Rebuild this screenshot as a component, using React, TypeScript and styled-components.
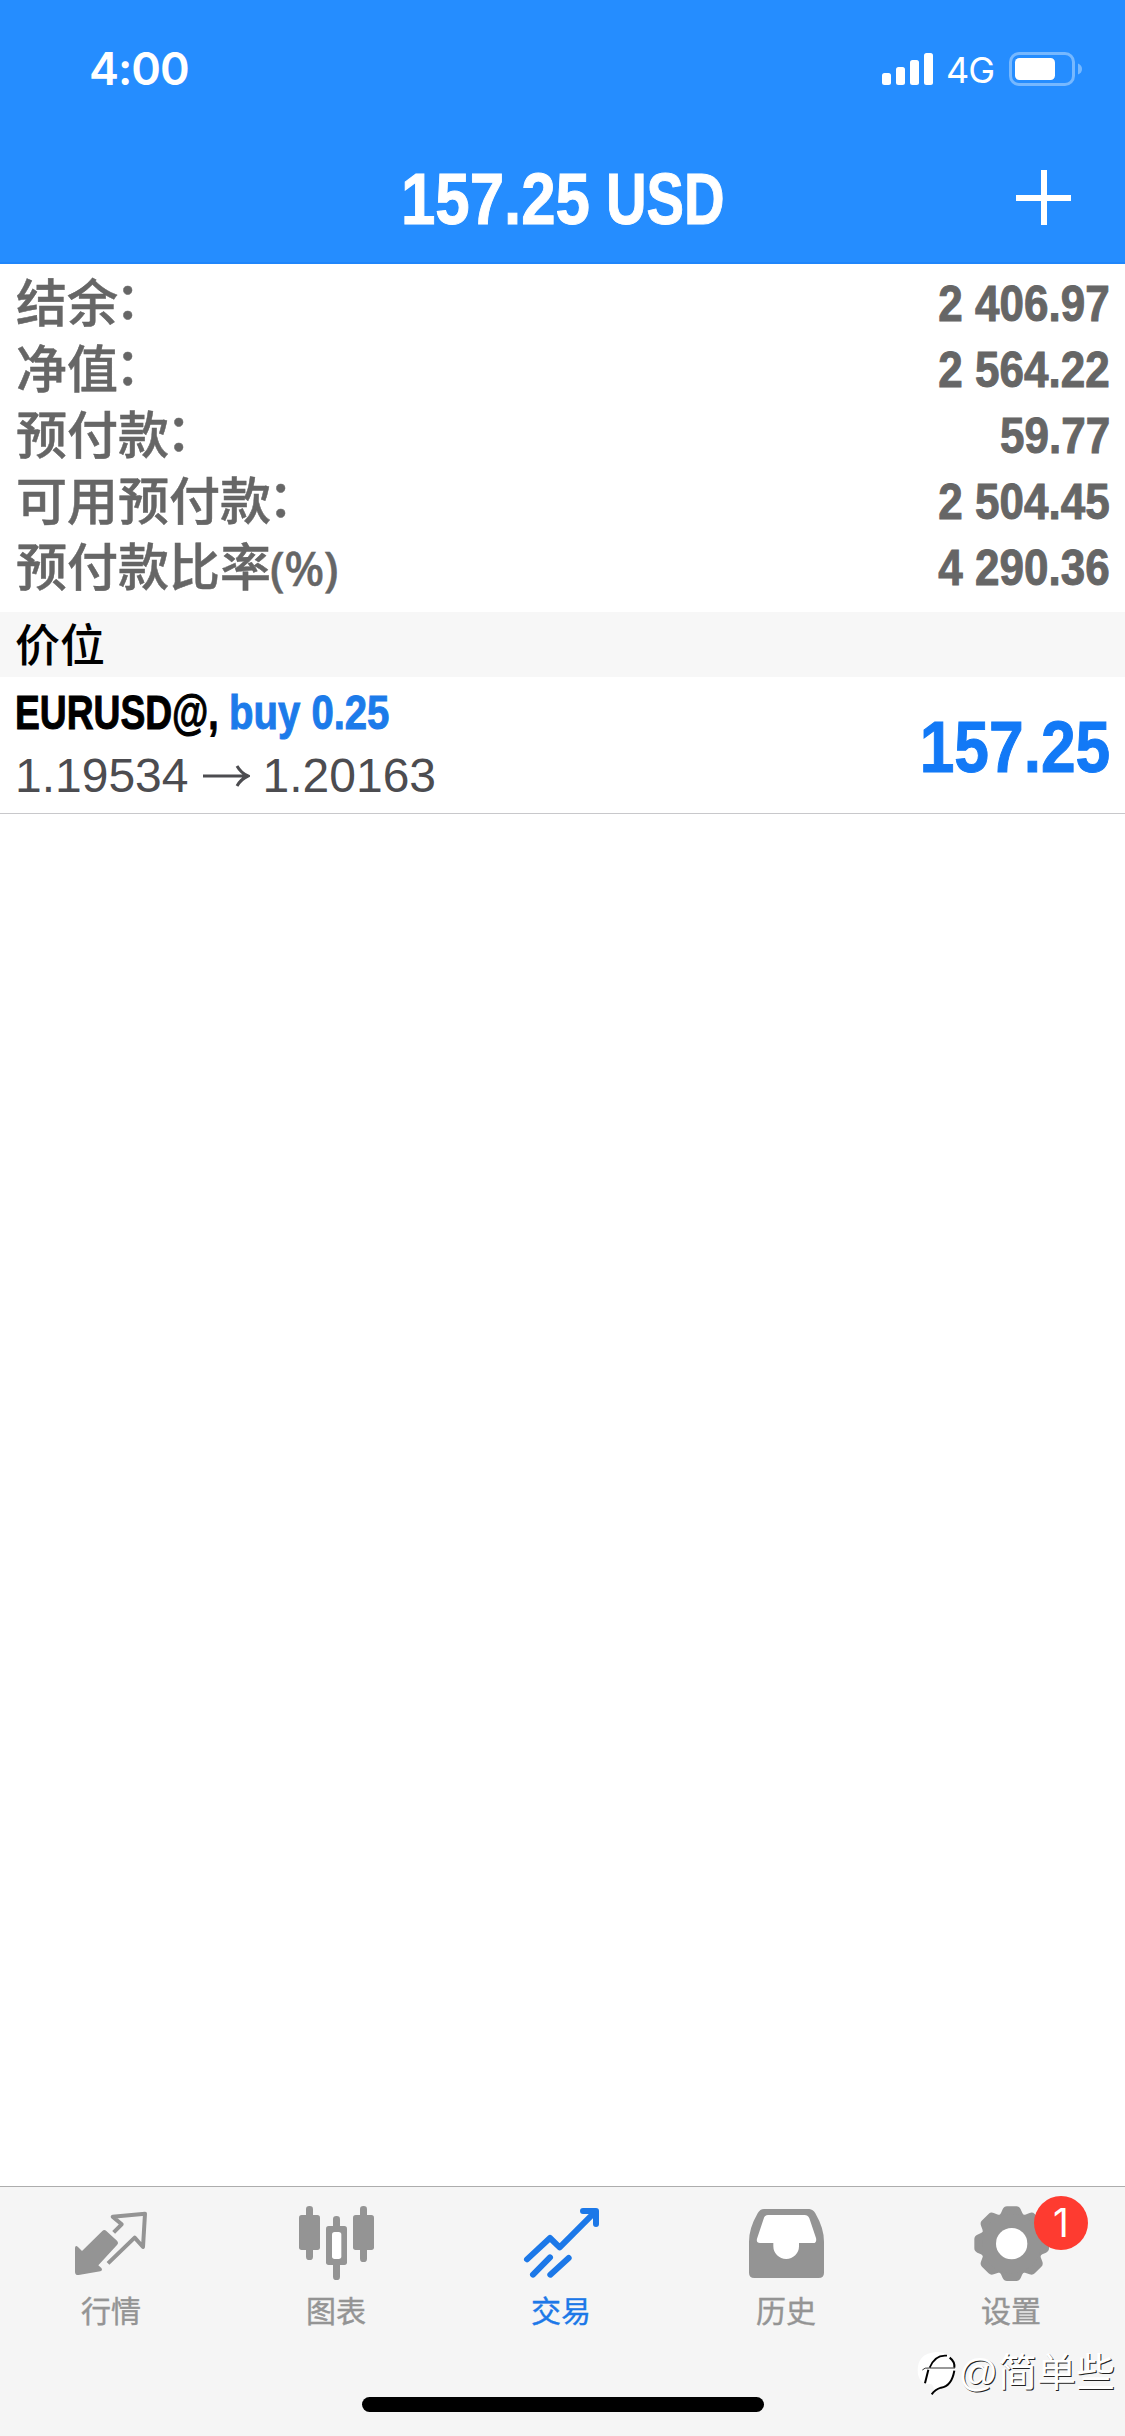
import React from 'react';
import styled, { createGlobalStyle } from 'styled-components';

const GlobalStyle = createGlobalStyle`
  * { box-sizing: border-box; }
  body { margin: 0; background: #fff; }
`;

const latin = '"Liberation Sans", "Noto Sans CJK SC", sans-serif';
const cjk = '"Noto Sans CJK SC", sans-serif';

const Screen = styled.div`
  display: flex;
  flex-direction: column;
  width: 1125px;
  height: 2436px;
  overflow: hidden;
  background: #fff;
  font-family: ${latin};
`;

const Header = styled.header`
  height: 264px;
  flex: none;
  background: #258dff;
  border-bottom: 2px solid #1f86fb;
  color: #fff;
`;

const StatusBar = styled.div`
  display: flex;
  align-items: center;
  justify-content: space-between;
  height: 138px;
  padding: 0 42px 0 89px;
`;

const Clock = styled.div`
  font: 600 45px/54px Inter, sans-serif;
  letter-spacing: -1px;
`;

const StatusIcons = styled.div`
  display: flex;
  align-items: center;
`;

const Network = styled.span`
  width: 75px;
  padding-left: 12px;
  padding-top: 2px;
  font: 400 36px/44px Inter, sans-serif;
  letter-spacing: -1px;
`;

const TitleBar = styled.div`
  display: grid;
  grid-template-columns: 1fr auto 1fr;
  align-items: center;
  height: 120px;
  padding: 0 53px;
`;

const Title = styled.h1`
  display: flex;
  grid-column: 2;
  margin: 0;
  padding-top: 2px;
  font-size: 72px;
  line-height: 118px;
`;

const AddButton = styled.button`
  justify-self: end;
  display: flex;
  padding: 0;
  border: 0;
  background: none;
  color: #fff;
`;

const Condensed = styled.span<{ $scale: number; $width?: number; $right?: boolean }>`
  display: block;
  flex: none;
  width: ${p => (p.$width ? `${p.$width}px` : 'auto')};
  font-weight: 700;
  white-space: nowrap;
  -webkit-text-stroke: 1px currentColor;
  transform: scaleX(${p => p.$scale});
  transform-origin: ${p => (p.$right ? 'right' : 'left')} center;
`;

const Summary = styled.section`
  flex: none;
  height: 348px;
  padding: 7px 15px 0 15px;
`;

const SummaryRow = styled.div`
  display: flex;
  justify-content: space-between;
  align-items: flex-start;
  height: 66px;
  color: #666;
`;

const SummaryLabel = styled.span`
  padding: 1px 0 0 1px;
  font: 500 51px/66px ${latin};
  -webkit-text-stroke: 0.5px currentColor;
`;

const Colon = styled.span`
  position: relative;
  left: -3px;
  top: -3px;
`;

const Unit = styled.span`
  margin-left: -1px;
  font: 500 47px/60px "Noto Sans", sans-serif;
  letter-spacing: -0.5px;
`;

const SummaryValue = styled(Condensed)`
  font-size: 50px;
  line-height: 66px;
`;

const SectionTitle = styled.h2`
  flex: none;
  height: 65px;
  margin: 0;
  padding-left: 15px;
  background: #f7f7f7;
  color: #000;
  font: 500 45px/61px ${cjk};
`;

const Position = styled.div`
  display: flex;
  justify-content: space-between;
  flex: none;
  height: 137px;
  padding: 0 15px 0 15px;
  border-bottom: 1px solid #c8c8cb;
`;

const PositionInfo = styled.div`
  display: flex;
  flex-direction: column;
`;

const Symbol = styled.div`
  display: flex;
  height: 71px;
  font-size: 48px;
  line-height: 71px;
  color: #000;
`;

const Side = styled(Condensed)`
  color: #1c7bea;
`;

const Prices = styled.div`
  display: flex;
  align-items: center;
  height: 56px;
  font-size: 48px;
  line-height: 56px;
  color: #4c4c50;
`;

const Arrow = styled.svg`
  margin: 0 13px 0 14px;
`;

const Profit = styled(Condensed)`
  font-size: 72px;
  line-height: 140px;
  color: #1279f6;
`;

const Blank = styled.main`
  flex: 1;
`;

const TabBar = styled.nav`
  display: grid;
  grid-template-columns: repeat(5, 225px);
  flex: none;
  height: 168px;
  border-top: 1px solid #adadad;
  background: #f5f5f5;
`;

const Tab = styled.a<{ $active?: boolean }>`
  position: relative;
  display: flex;
  flex-direction: column;
  align-items: center;
  padding: 11px 1px 0 0;
  color: ${p => (p.$active ? '#1c78e8' : '#949494')};
`;

const TabLabel = styled.span`
  margin: 3px 2px 0 0;
  font: 400 30px/40px ${cjk};
  -webkit-text-stroke: 0.4px currentColor;
`;

const Badge = styled.span`
  position: absolute;
  left: 134px;
  top: 9px;
  width: 54px;
  height: 54px;
  border-radius: 50%;
  background: #fe3b30;
  color: #fff;
  font: 400 39px/53px Inter, sans-serif;
  text-align: center;
`;

const Footer = styled.footer`
  position: relative;
  display: flex;
  justify-content: center;
  flex: none;
  height: 82px;
  padding-top: 43px;
  background: #f5f5f5;
`;

const HomeIndicator = styled.div`
  width: 402px;
  height: 15px;
  border-radius: 8px;
  background: #000;
`;

const Watermark = styled.div`
  position: absolute;
  right: 10px;
  top: -11px;
  display: flex;
  align-items: center;
  color: #fff;
  font: 400 39px/60px ${latin};
  text-shadow: 1px 1px 0 #222;
`;

const SignalIcon = () => (
  <svg width="52" height="34" viewBox="0 0 52 34" fill="#fff">
    <rect x="0" y="21" width="9" height="12" rx="2.5" />
    <rect x="14" y="15" width="9" height="18" rx="2.5" />
    <rect x="28" y="8" width="9" height="25" rx="2.5" />
    <rect x="42" y="1" width="9" height="32" rx="2.5" />
  </svg>
);

const BatteryIcon = () => (
  <svg width="74" height="34" viewBox="0 0 74 34">
    <rect x="1.5" y="1.5" width="63" height="31" rx="8.5" fill="none" stroke="#76b8ff" strokeWidth="3" />
    <path d="M69 11.5Q73 13 73 17T69 22.5Z" fill="#76b8ff" />
    <rect x="6" y="6" width="40" height="22" rx="4.5" fill="#fff" />
  </svg>
);

const MarketIcon = () => (
  <svg width="91" height="88" viewBox="201 84 273 264">
    <path
      d="M307 183Q313 177 319 183L351 212Q357 219 351 225L295 286L304 294Q309 301 301 304L236 315Q225 316 225 305V234Q226 224 234 231L246 243Z"
      fill="currentColor"
    />
    <path
      d="M324 280L404 203L429 231L435 131L338 140L365 163L341 187"
      fill="none"
      stroke="currentColor"
      strokeWidth="12"
      strokeLinejoin="round"
    />
  </svg>
);

const ChartIcon = () => (
  <svg width="91" height="88" viewBox="876 84 273 264" fill="currentColor">
    <rect x="918" y="108" width="21" height="162" rx="10" />
    <rect x="897" y="135" width="63" height="105" rx="8" />
    <rect x="999" y="138" width="21" height="192" rx="10" />
    <rect x="978" y="168" width="63" height="117" rx="8" />
    <rect x="996" y="186" width="28" height="81" rx="8" fill="#fff" />
    <rect x="1080" y="108" width="21" height="168" rx="10" />
    <rect x="1059" y="135" width="63" height="105" rx="8" />
  </svg>
);

const TradeIcon = () => (
  <svg
    width="91"
    height="88"
    viewBox="171 84 273 264"
    fill="none"
    stroke="currentColor"
    strokeWidth="18"
    strokeLinecap="round"
    strokeLinejoin="round"
  >
    <path d="M201 268L270 204L299 232L403 128M369 123H408V162M219 314L270 262M271 314L326 264" />
  </svg>
);

const HistoryIcon = () => (
  <svg width="91" height="88" viewBox="846 84 273 264">
    <path
      d="M912 117H1048Q1059 118 1066 130Q1092 175 1092 215V308Q1092 324 1076 324H883Q867 324 867 308V215Q867 175 893 130Q900 117 912 117Z"
      fill="currentColor"
    />
    <path
      d="M924 135H1034Q1043 135 1048 145L1068 204Q1071 219 1060 219H1017V229A38.500 38 0 0 1 940 229V219H900Q888 219 891 206L911 146Q914 135 924 135Z"
      fill="#fff"
    />
  </svg>
);

const SettingsIcon = () => (
  <svg width="91" height="88" viewBox="321 84 273 264">
    <g transform="translate(455 221)" fill="currentColor">
      {[0, 45, 90, 135, 180, 225, 270, 315].map(angle => (
        <path
          key={angle}
          transform={`rotate(${angle})`}
          d="M-14 -112H14Q23 -112 27 -103L32 -92Q34 -86 42 -84V-60H-42V-84Q-34 -86 -32 -92L-27 -103Q-23 -112 -14 -112Z"
        />
      ))}
      <circle r="89" />
      <circle r="47" fill="#fff" />
    </g>
  </svg>
);

const WatermarkLogo = () => (
  <svg width="42" height="50" viewBox="3 33 126 150" fill="none">
    <path d="M8 100Q8 50 62 45Q104 42 118 78Q130 120 92 142L54 168Q60 150 50 142Q8 142 8 100Z" fill="#fff" />
    <path d="M30 139L40 98" stroke="#000" strokeWidth="6" />
    <path d="M22 99Q28 91 44 93H120" stroke="#333" strokeWidth="3" />
    <path d="M44 92Q60 52 96 56" stroke="#000" strokeWidth="5" />
    <path d="M104 62Q120 74 118 92M118 101Q110 148 78 152Q60 158 50 172" stroke="#000" strokeWidth="6" />
  </svg>
);

const summary = [
  { label: '结余', colon: true, value: '2 406.97' },
  { label: '净值', colon: true, value: '2 564.22' },
  { label: '预付款', colon: true, value: '59.77' },
  { label: '可用预付款', colon: true, value: '2 504.45' },
  { label: '预付款比率', unit: '(%)', value: '4 290.36' },
];

const tabs = [
  { label: '行情', Icon: MarketIcon },
  { label: '图表', Icon: ChartIcon },
  { label: '交易', Icon: TradeIcon, active: true },
  { label: '历史', Icon: HistoryIcon },
  { label: '设置', Icon: SettingsIcon, badge: 1 },
];

export default function App() {
  return (
    <Screen>
      <GlobalStyle />
      <Header>
        <StatusBar>
          <Clock>4:00</Clock>
          <StatusIcons>
            <SignalIcon />
            <Network>4G</Network>
            <BatteryIcon />
          </StatusIcons>
        </StatusBar>
        <TitleBar>
          <Title>
            <Condensed $scale={0.858} $width={205}>157.25</Condensed>
            <Condensed $scale={0.78} $width={119}>USD</Condensed>
          </Title>
          <AddButton aria-label="+">
            <svg width="56" height="56" viewBox="0 0 56 56" stroke="#fff" strokeWidth="6">
              <path d="M0 28H55M28 0V55" />
            </svg>
          </AddButton>
        </TitleBar>
      </Header>
      <Summary>
        {summary.map(row => (
          <SummaryRow key={row.label}>
            <SummaryLabel>
              {row.label}
              {row.colon && <Colon>：</Colon>}
              {row.unit && <Unit>{row.unit}</Unit>}
            </SummaryLabel>
            <SummaryValue $scale={0.88} $right>{row.value}</SummaryValue>
          </SummaryRow>
        ))}
      </Summary>
      <SectionTitle>价位</SectionTitle>
      <Position>
        <PositionInfo>
          <Symbol>
            <Condensed $scale={0.775} $width={214}>EURUSD@,</Condensed>
            <Side $scale={0.835}>buy 0.25</Side>
          </Symbol>
          <Prices>
            <span>1.19534</span>
            <Arrow width="47" height="24" viewBox="0 0 47 24" fill="none" stroke="currentColor" strokeWidth="3">
              <path d="M0 12H45M34 2Q38 9 45 12Q38 15 34 22" />
            </Arrow>
            <span>1.20163</span>
          </Prices>
        </PositionInfo>
        <Profit $scale={0.865} $right>157.25</Profit>
      </Position>
      <Blank />
      <TabBar>
        {tabs.map(({ label, Icon, active, badge }) => (
          <Tab key={label} $active={active}>
            <Icon />
            <TabLabel>{label}</TabLabel>
            {badge && <Badge>{badge}</Badge>}
          </Tab>
        ))}
      </TabBar>
      <Footer>
        <HomeIndicator />
        <Watermark>
          <WatermarkLogo />
          <span>@简单些</span>
        </Watermark>
      </Footer>
    </Screen>
  );
}
